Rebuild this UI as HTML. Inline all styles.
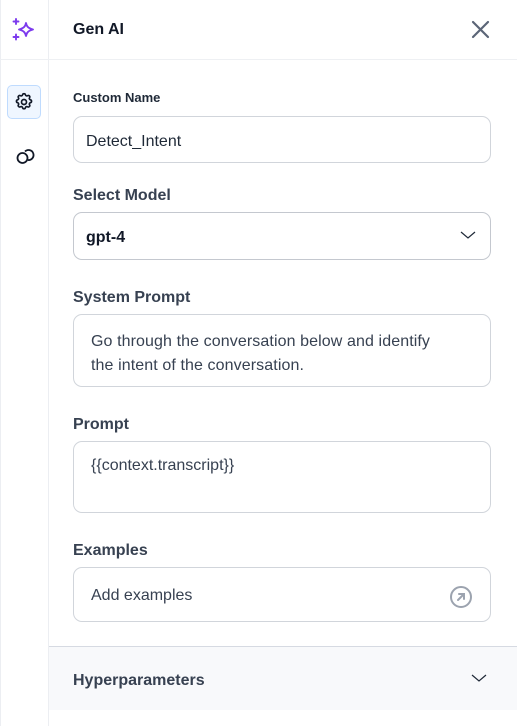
<!DOCTYPE html>
<html><head><style>
*{box-sizing:border-box;margin:0;padding:0}
body{width:517px;height:726px;background:#fff;font-family:"Liberation Sans",sans-serif;position:relative;overflow:hidden;color:#1f2937}
.side{position:absolute;left:0;top:0;width:49px;height:726px;border-right:1px solid #eceef2;border-left:1px solid #eceef2}
.hline{position:absolute;left:0;top:59px;width:517px;height:1px;background:#eef0f3}
.lbl{position:absolute;left:73px;font-size:16px;color:#374151;font-weight:bold}
.box{position:absolute;left:73px;width:418px;border:1px solid #d1d5db;border-radius:9px;font-size:16px;color:#1f2937}
</style></head><body>
<div class="side"></div>
<div class="hline"></div>
<svg style="position:absolute;left:11px;top:17px" width="26" height="26" viewBox="0 0 26 26" fill="none" stroke="#7c3aed" stroke-width="1.9" stroke-linecap="round" stroke-linejoin="round">
<path d="M15 6c0.7 3.6 2.2 5.2 7 6.5-4.8 1.3-6.3 2.9-7 6.5-0.7-3.6-2.2-5.2-7-6.5 4.8-1.3 6.3-2.9 7-6.5z"/>
<path d="M5 2v5M2.5 4.5h5M5 17.5v5M2.5 20h5"/></svg>
<div style="position:absolute;left:7px;top:85px;width:34px;height:34px;border:1px solid #bfdbfe;background:#eff6ff;border-radius:5px"></div>
<svg style="position:absolute;left:14px;top:92px" width="20" height="20" viewBox="0 0 24 24" fill="none" stroke="#111827" stroke-width="2"><path d="M10.3 3.3c.4-1.7 3-1.7 3.4 0a1.7 1.7 0 0 0 2.6 1.1c1.5-.9 3.3.8 2.4 2.4a1.7 1.7 0 0 0 1 2.6c1.8.4 1.8 3 0 3.4a1.7 1.7 0 0 0-1 2.6c.9 1.5-.9 3.3-2.4 2.4a1.7 1.7 0 0 0-2.6 1c-.4 1.8-3 1.8-3.4 0a1.7 1.7 0 0 0-2.6-1c-1.5.9-3.3-.9-2.4-2.4a1.7 1.7 0 0 0-1-2.6c-1.8-.4-1.8-3 0-3.4a1.7 1.7 0 0 0 1-2.6c-.9-1.5.9-3.3 2.4-2.4a1.7 1.7 0 0 0 2.6-1.1z"/><circle cx="12" cy="12" r="3"/></svg>
<svg style="position:absolute;left:15px;top:145px" width="22" height="22" viewBox="0 0 22 22" fill="none" stroke="#111827" stroke-width="1.8"><circle cx="7.5" cy="13" r="5"/><path d="M10 6.5a5 5 0 1 1 3 8.5"/></svg>
<div style="position:absolute;left:73px;top:21px;font-size:16px;font-weight:bold;color:#111827">Gen AI</div>
<svg style="position:absolute;left:471px;top:20px" width="19" height="19" viewBox="0 0 19 19" stroke="#5b6577" stroke-width="2.2" stroke-linecap="round"><path d="M2 2l15 15M17 2L2 17"/></svg>
<div class="lbl" style="top:90px;font-size:13px;color:#1f2937">Custom Name</div>
<div class="box" style="top:116px;height:47px;padding:16px 12px">Detect_Intent</div>
<div class="lbl" style="top:187px">Select Model</div>
<div class="box" style="top:212px;height:48px;padding:16px 12px;border-color:#c4c8cf;font-weight:bold;color:#111827">gpt-4</div>
<svg style="position:absolute;left:459px;top:229px" width="18" height="12" viewBox="0 0 18 12" fill="none" stroke="#1f2937" stroke-width="1.2"><path d="M2 3l7 6 7-6"/></svg>
<div class="lbl" style="top:289px">System Prompt</div>
<div class="box" style="top:314px;height:73px;padding:15px 40px 15px 17px;line-height:24px;color:#374151;letter-spacing:0.1px">Go through the conversation below and identify the intent of the conversation.</div>
<div class="lbl" style="top:416px">Prompt</div>
<div class="box" style="top:441px;height:72px;padding:15px 17px;color:#374151">{{context.transcript}}</div>
<div class="lbl" style="top:542px">Examples</div>
<div class="box" style="top:567px;height:55px;padding:19px 17px;color:#374151">Add examples</div>
<svg style="position:absolute;left:449px;top:585px" width="24" height="24" viewBox="0 0 24 24" fill="none" stroke="#9ca3af" stroke-width="2" stroke-linecap="round"><circle cx="12" cy="12" r="10"/><path d="M9 15l6-6M10 9h5v5"/></svg>
<div style="position:absolute;left:49px;top:646px;width:468px;height:64px;background:#f8f9fb;border-top:1px solid #d6dae2"></div>
<div class="lbl" style="top:672px">Hyperparameters</div>
<svg style="position:absolute;left:470px;top:672px" width="18" height="12" viewBox="0 0 18 12" fill="none" stroke="#1f2937" stroke-width="1.2"><path d="M2 3l7 6 7-6"/></svg>
</body></html>
